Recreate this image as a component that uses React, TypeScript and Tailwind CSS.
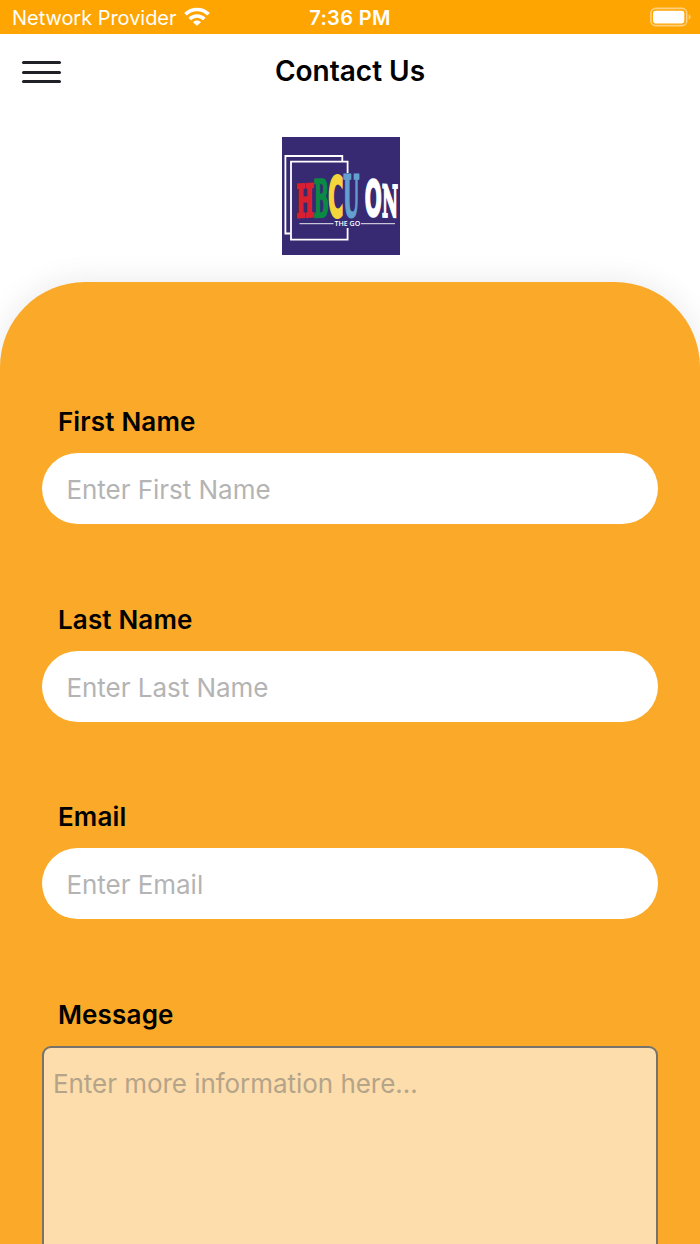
import { type ReactNode } from "react";

// baseline is shared, every letter has its own height
const letters = [
  { char: "H", x: 14.6, y: 80, width: 17, size: 44, weight: 3, fill: "#d9202f", font: "DejaVu Serif", skew: -3 },
  { char: "B", x: 32, y: 80, width: 14.6, size: 51, weight: 2.6, fill: "#0b8a43", font: "DejaVu Serif", skew: -2 },
  { char: "C", x: 46.3, y: 79.2, width: 15, size: 54.5, weight: 3, fill: "#f5d53c", font: "DejaVu Sans", skew: 0 },
  { char: "U", x: 61.3, y: 79.2, width: 16, size: 55.5, weight: 2.8, fill: "#62a0d0", font: "DejaVu Serif", skew: 0 },
  { char: "O", x: 82.8, y: 79.4, width: 17, size: 49.5, weight: 2.4, fill: "#fff", font: "DejaVu Sans", skew: 0 },
  { char: "N", x: 100, y: 79.5, width: 16, size: 43.5, weight: 2.4, fill: "#fff", font: "DejaVu Serif", skew: 2 },
];

function Logo() {
  return (
    <svg width="118" height="118" viewBox="0 0 118 118">
      <rect width="118" height="118" fill="#372a72" />
      <g fill="none" stroke="#fff" strokeWidth="1.8">
        <path d="M60.3 24V19H3.4v77.5H8" />
        <path d="M65.6 36V24.6H9v78h56.6V91" />
      </g>
      {letters.map((l) => (
        <text
          key={l.char}
          x="0"
          y="0"
          transform={`translate(${l.x} ${l.y}) skewY(${l.skew})`}
          fontFamily={l.font}
          fontWeight="700"
          fontSize={l.size}
          textLength={l.width}
          lengthAdjust="spacingAndGlyphs"
          fill={l.fill}
          stroke={l.fill}
          strokeWidth={l.weight}
        >
          {l.char}
        </text>
      ))}
      <path d="M17.5 86.7h34M79 86.7h34" stroke="#fff" strokeWidth="0.9" />
      <text x="52.6" y="89.2" fontFamily="Open Sans" fontWeight="600" fontSize="7.2" textLength="25.6" lengthAdjust="spacingAndGlyphs" fill="#fff">THE GO</text>
    </svg>
  );
}

function StatusBar() {
  return (
    <div className="grid h-[34px] grid-cols-3 items-center bg-[#ffa502] pt-[2px] text-white">
      <div className="flex items-center gap-[8px] pl-[12px]">
        <span className="text-[20px] leading-none tracking-[-0.04px] whitespace-nowrap">Network Provider</span>
        <svg width="26" height="19" viewBox="0 0 26 19" className="mb-[3px] shrink-0" fill="none" stroke="#fff" strokeWidth="3.6">
          <path d="M1.5 7.3C7.8 0.9 18.2 0.9 24.5 7.3" />
          <path d="M5.7 12.1C9.7 8 16.3 8 20.3 12.1" />
          <path d="M13 18.8L9 15.2C11.2 12.8 14.8 12.8 17 15.2Z" fill="#fff" stroke="none" />
        </svg>
      </div>
      <span className="text-center text-[20px] leading-none font-semibold tracking-[0.35px]">7:36 PM</span>
      <div className="flex justify-end pr-[9px] pb-[2px]">
        <svg width="41" height="20" viewBox="0 0 41 20">
          <rect x="0.9" y="1.4" width="35.8" height="17.2" rx="4.6" fill="none" stroke="#ffd080" strokeWidth="1.6" />
          <rect x="3" y="3.8" width="31.3" height="12.6" rx="2.4" fill="#fff" />
          <path d="M38.7 7.2c2.6 1.4 2.6 4.2 0 5.6Z" fill="#ffd080" />
        </svg>
      </div>
    </div>
  );
}

function Header() {
  return (
    <div className="grid h-[76px] grid-cols-3 items-center px-[22px]">
      <button type="button" aria-label="Menu" className="flex w-[39px] flex-col gap-[6.8px]">
        <span className="h-[3px] rounded-full bg-[#202127]" />
        <span className="h-[3px] rounded-full bg-[#202127]" />
        <span className="h-[3px] rounded-full bg-[#202127]" />
      </button>
      <h1 className="pb-[2px] text-center text-[28px] leading-none font-semibold whitespace-nowrap">Contact Us</h1>
    </div>
  );
}

function Field({ label, children }: { label: string; children: ReactNode }) {
  return (
    <label className="block h-[197.7px]">
      <span className="mb-[13px] block pl-[15.5px] text-[26px] leading-[36px] font-semibold tracking-[0.18px]">{label}</span>
      {children}
    </label>
  );
}

const fields = ["First Name", "Last Name", "Email"];

function App() {
  return (
    <div className="h-[1244px] w-full overflow-hidden bg-white font-['Inter',sans-serif] text-black">
      <StatusBar />
      <Header />
      <div className="flex h-[172px] items-start justify-center pt-[27px] pr-[18px]">
        <Logo />
      </div>
      <div className="h-[1000px] rounded-t-[85px] bg-[#faa928] px-[42.4px] pt-[122px] shadow-[0_0_32px_rgba(0,0,0,0.09)]">
        {fields.map((name) => (
          <Field key={name} label={name}>
            <input
              type="text"
              placeholder={`Enter ${name}`}
              className="block h-[71px] w-full rounded-full bg-white px-[24px] pt-[2px] text-[26px] tracking-[-0.03px] outline-none placeholder:text-[#b4b4b4]"
            />
          </Field>
        ))}
        <Field label="Message">
          <textarea
            placeholder="Enter more information here..."
            className="block h-[300px] w-full resize-none rounded-[9px] border-2 border-[#77736c] bg-[#fdddab] px-[8.5px] pt-[18px] text-[26px] leading-[36px] tracking-[-0.04px] outline-none placeholder:text-[#b4a48a]"
          />
        </Field>
      </div>
    </div>
  );
}

export default App;
